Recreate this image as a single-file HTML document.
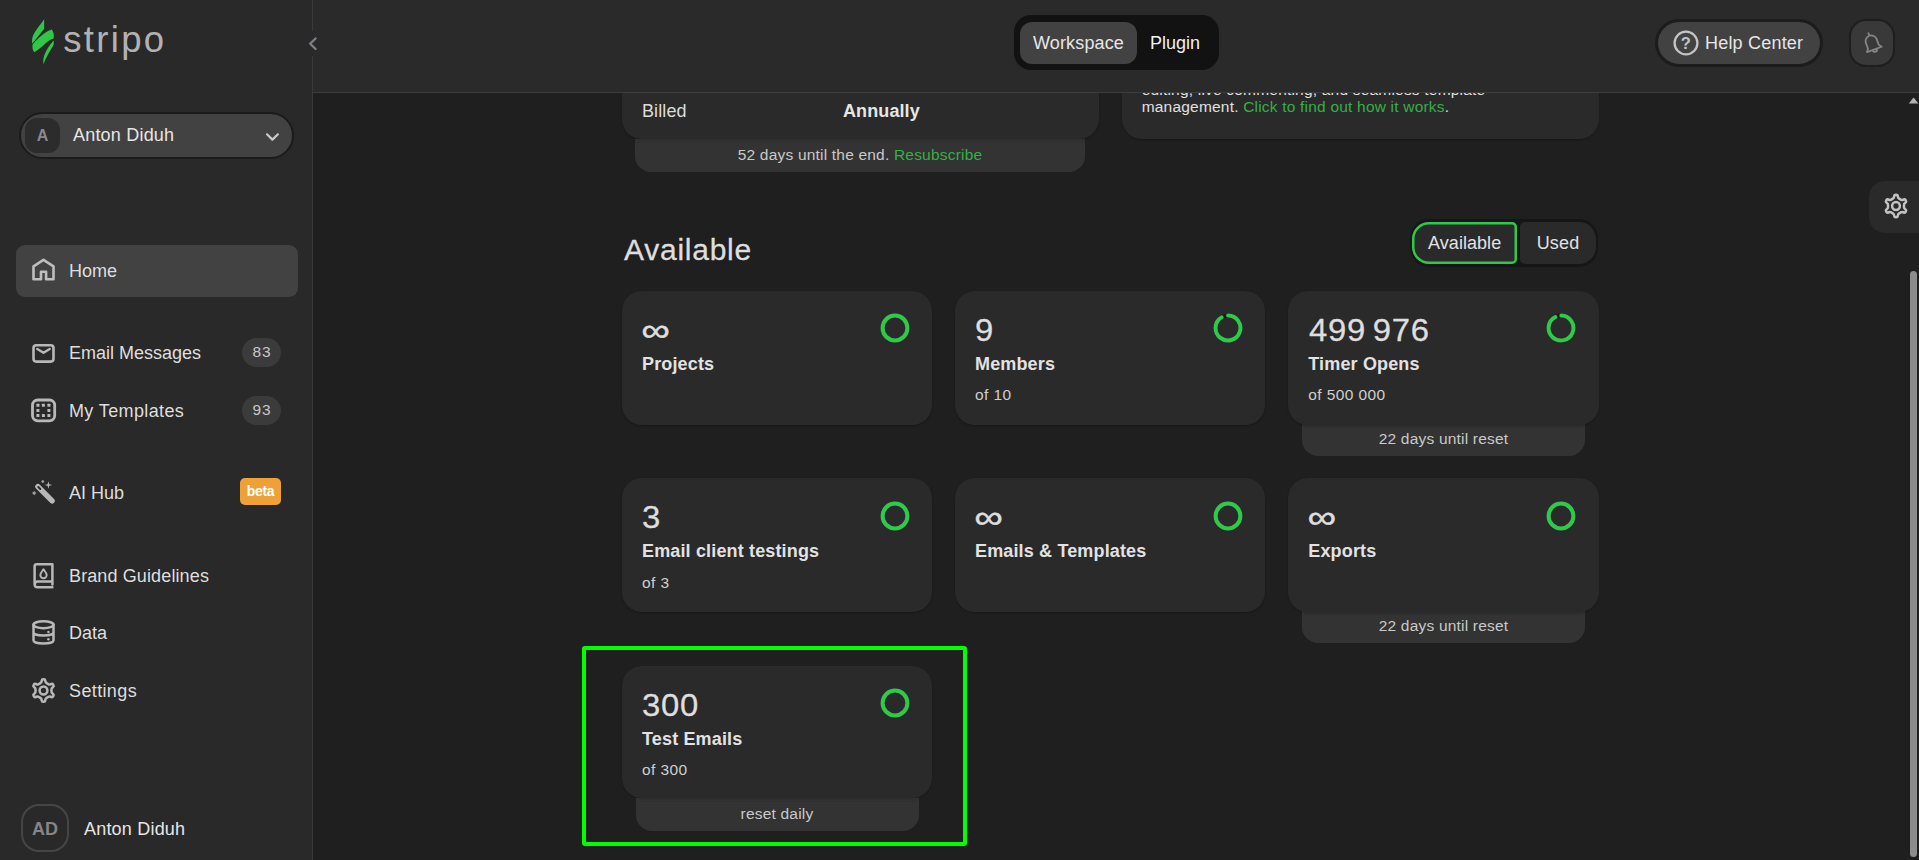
<!DOCTYPE html>
<html lang="en">
<head>
<meta charset="utf-8">
<title>Stripo</title>
<style>
*{box-sizing:border-box;margin:0;padding:0}
html,body{width:1919px;height:860px;overflow:hidden;background:#1f1f1f}
body{font-family:"Liberation Sans",Arial,sans-serif;color:#e4e4e4;position:relative}
.abs{position:absolute}
/* ---------- sidebar ---------- */
#side{position:absolute;left:0;top:0;width:313px;height:860px;background:#292929;border-right:1px solid #3a3a3a}
#logo-txt{position:absolute;left:63.3px;top:17.5px;font-size:36.5px;line-height:44px;color:#b2b2b2;letter-spacing:2.3px}
#ws{position:absolute;left:19px;top:112px;width:275px;height:47px;border-radius:24px;background:#424242;border:2px solid #1b1b1b}
#ws .av{position:absolute;left:4px;top:4px;width:35px;height:35px;border-radius:12px;background:#2c2c2c;color:#8a8a8a;font-weight:bold;font-size:16px;line-height:35px;text-align:center}
#ws .nm{position:absolute;left:52px;top:0;line-height:43px;font-size:18px;color:#e6e6e6;letter-spacing:0.2px}
.nav{position:absolute;left:16px;width:281px;height:51px;border-radius:8px}
.nav.on{background:#424242}
.nav svg{position:absolute;left:15px;top:13px;width:25px;height:25px}
.nav .t{position:absolute;left:53px;top:1px;line-height:51px;font-size:18px;color:#dedede;white-space:nowrap}
.badge{position:absolute;left:226px;top:11px;width:39px;height:29px;border-radius:15px;background:#3b3b3b;color:#c8c8c8;font-size:15.5px;line-height:27px;text-align:center;letter-spacing:0.9px;padding-left:0.9px}
.beta{position:absolute;left:224px;top:11px;width:41px;height:27px;border-radius:5px;background:#eda136;color:#fff;font-size:14px;font-weight:bold;line-height:26px;text-align:center;letter-spacing:-0.3px}
#user .av{position:absolute;left:21px;top:804px;width:48px;height:48px;border-radius:18px;border:2px solid #464646;color:#858585;font-weight:bold;font-size:18px;line-height:47px;text-align:center}
#user .nm{position:absolute;left:84px;top:805px;line-height:48px;font-size:18px;color:#e6e6e6;letter-spacing:0.2px}
/* ---------- topbar ---------- */
#top{position:absolute;left:313px;top:0;width:1606px;height:93px;background:#2a2a2a;border-bottom:1px solid #3d3d3d;z-index:5}
#seg{position:absolute;left:701px;top:15px;width:205px;height:55px;border-radius:17px;background:#121212}
#seg .a{position:absolute;left:6px;top:7px;width:117px;height:42px;border-radius:12px;background:#424242;color:#e6e6e6;letter-spacing:0.15px;font-size:18px;line-height:42px;text-align:center}
#seg .b{position:absolute;left:123px;top:7px;width:76px;height:42px;color:#f0f0f0;font-size:18px;line-height:42px;text-align:center}
#help{position:absolute;left:1342px;top:19px;width:168px;height:48px;border-radius:24px;background:#424242;border:3px solid #1c1c1c}
#help .t{position:absolute;left:47px;top:0;line-height:43px;font-size:18px;letter-spacing:0.2px;color:#e6e6e6;white-space:nowrap}
#bell{position:absolute;left:1536px;top:19px;width:46px;height:48px;border-radius:17px;background:#393939;border:2px solid #1e1e1e}
/* ---------- main ---------- */
.card{position:absolute;z-index:1;background:#2a2a2a;border-radius:20px;box-shadow:0 1px 2px rgba(0,0,0,.25)}
.foot{position:absolute;background:#333333;box-shadow:inset 0 1px 0 #393939;border-radius:0 0 16px 16px;color:#c9c9c9;font-size:15.5px;letter-spacing:0.2px;text-align:center;white-space:nowrap}
.foot::before{content:"";position:absolute;left:2px;right:2px;top:3px;border-top:1px dotted #2c2c2c}
.g{color:#34b045}
.big{position:absolute;left:19.5px;top:22px;font-size:31px;line-height:36px;color:#dedede;-webkit-text-stroke:0.3px #dedede;white-space:nowrap;letter-spacing:0.7px;word-spacing:-3px;transform:scaleX(1.06);transform-origin:0 50%}
.inf{position:absolute;left:19.5px;top:19px;font-size:40px;line-height:40px;color:#dedede;-webkit-text-stroke:0.6px #dedede;transform:scale(1,0.8);transform-origin:0 50%}
.ttl{position:absolute;left:20px;top:61px;font-size:18px;line-height:24px;font-weight:bold;color:#e2e2e2;white-space:nowrap;letter-spacing:0.15px}
.sub{position:absolute;left:20px;top:94px;font-size:15.5px;letter-spacing:0.4px;line-height:20px;color:#cfcfcf;white-space:nowrap}
.ring{position:absolute;left:257px;top:21px;width:32px;height:32px}
</style>
</head>
<body>

<!-- ================= MAIN ================= -->
<div id="main">
  <div class="card" style="left:622px;top:40px;width:477.3px;height:99px">
    <div class="abs" style="left:20px;top:59px;font-size:18px;line-height:24px;color:#dcdcdc;letter-spacing:0.1px">Billed</div>
    <div class="abs" style="left:221px;top:59px;font-size:18px;line-height:24px;color:#e6e6e6;font-weight:bold;letter-spacing:0.1px">Annually</div>
  </div>
  <div class="foot" style="left:635px;top:138.5px;width:450px;height:33.5px;line-height:32px">52 days until the end. <span class="g">Resubscribe</span></div>

  <div class="card" style="left:1121.700px;top:40px;width:477.5px;height:98.500px">
    <div class="abs" style="left:20px;top:41px;font-size:15.5px;letter-spacing:0.2px;line-height:17px;color:#e0e0e0;white-space:nowrap">editing, live commenting, and seamless template<br>management. <span class="g">Click to find out how it works</span>.</div>
  </div>

  <div class="abs" style="left:624px;top:230px;font-size:30px;line-height:40px;color:#dedede;letter-spacing:0.75px;-webkit-text-stroke:0.3px #dedede">Available</div>

  <div class="abs" style="left:1409.800px;top:219.300px;width:188px;height:47.300px;border-radius:19.500px;background:#161616">
    <div class="abs" style="left:2.200px;top:2.700px;width:105.300px;height:41.900px;border-radius:17px 5px 5px 17px;background:#2a2a2a;box-shadow:inset 0 0 0 2.500px #2fc84a;font-size:18px;line-height:42.500px;text-align:center;color:#e2e2e2;letter-spacing:0.05px">Available</div>
    <div class="abs" style="left:110.600px;top:2.700px;width:75.300px;height:41.900px;border-radius:5px 17px 17px 5px;background:#2a2a2a;font-size:18px;line-height:42.500px;text-align:center;color:#e2e2e2;letter-spacing:0.15px">Used</div>
  </div>
  <div class="card" style="left:622px;top:291px;width:310px;height:133.5px"><div class="inf">∞</div><div class="ttl">Projects</div><svg class="ring" viewBox="0 0 32 32"><circle cx="16" cy="16" r="12.4" fill="none" stroke="#2fc94b" stroke-width="4"/></svg></div>
  <div class="card" style="left:955px;top:291px;width:310px;height:133.5px"><div class="big">9</div><div class="ttl">Members</div><div class="sub">of 10</div><svg class="ring" viewBox="0 0 32 32"><circle cx="16" cy="16" r="12.4" fill="none" stroke="#1c1c1c" stroke-width="4"/><path d="M16.11 3.60 A12.4 12.4 0 1 1 9.56 5.40" fill="none" stroke="#2fc94b" stroke-width="4" stroke-linecap="round"/></svg></div>
  <div class="card" style="left:1288.3px;top:291px;width:310.5px;height:133.5px"><div class="big" style="left:21px">499 976</div><div class="ttl">Timer Opens</div><div class="sub">of 500 000</div><svg class="ring" viewBox="0 0 32 32"><circle cx="16" cy="16" r="12.4" fill="none" stroke="#1c1c1c" stroke-width="4"/><path d="M16.35 3.60 A12.4 12.4 0 1 1 10.31 4.98" fill="none" stroke="#2fc94b" stroke-width="4" stroke-linecap="round"/></svg></div>
  <div class="foot" style="left:1302px;top:423.5px;width:283px;height:32.5px;line-height:29px">22 days until reset</div>
  <div class="card" style="left:622px;top:477.5px;width:310px;height:134.5px"><div class="big">3</div><div class="ttl">Email client testings</div><div class="sub" style="margin-top:1.5px">of 3</div><svg class="ring" style="margin-top:1px" viewBox="0 0 32 32"><circle cx="16" cy="16" r="12.4" fill="none" stroke="#2fc94b" stroke-width="4"/></svg></div>
  <div class="card" style="left:955px;top:477.5px;width:310px;height:134.5px"><div class="inf">∞</div><div class="ttl">Emails &amp; Templates</div><svg class="ring" style="margin-top:1px" viewBox="0 0 32 32"><circle cx="16" cy="16" r="12.4" fill="none" stroke="#2fc94b" stroke-width="4"/></svg></div>
  <div class="card" style="left:1288.3px;top:477.5px;width:310.5px;height:134.5px"><div class="inf">∞</div><div class="ttl">Exports</div><svg class="ring" style="margin-top:1px" viewBox="0 0 32 32"><circle cx="16" cy="16" r="12.4" fill="none" stroke="#2fc94b" stroke-width="4"/></svg></div>
  <div class="foot" style="left:1302px;top:611px;width:283px;height:32px;line-height:29.5px">22 days until reset</div>
  <div class="card" style="left:622px;top:666px;width:310px;height:132px"><div class="big">300</div><div class="ttl">Test Emails</div><div class="sub">of 300</div><svg class="ring" viewBox="0 0 32 32"><circle cx="16" cy="16" r="12.4" fill="none" stroke="#2fc94b" stroke-width="4"/></svg></div>
  <div class="foot" style="left:635.5px;top:798px;width:283px;height:33px;line-height:31px">reset daily</div>
  <div class="abs" style="left:582px;top:645.5px;width:384.5px;height:200px;border:4px solid #00ff00;border-radius:3px"></div>
  <div class="abs" id="gearbtn" style="left:1869px;top:181px;width:50px;height:52px;border-radius:16px 0 0 16px;background:#2a2a2a">
    <svg class="abs" style="left:6.600px;top:5.300px" width="40" height="40" viewBox="0 0 40 40" fill="none" stroke="#c2c2c2" stroke-width="2.500" stroke-linejoin="round"><path d="M23.13 12.60 Q22.01 11.95 21.84 10.66 L21.75 10.00 Q21.59 8.71 20.29 8.71 L19.71 8.71 Q18.41 8.71 18.25 10.00 L18.16 10.66 Q17.99 11.95 16.87 12.60 L15.16 13.58 Q14.03 14.23 12.83 13.74 L12.22 13.48 Q11.02 12.98 10.37 14.11 L10.08 14.60 Q9.43 15.73 10.46 16.52 L10.99 16.92 Q12.02 17.71 12.02 19.01 L12.02 20.99 Q12.02 22.29 10.99 23.08 L10.46 23.48 Q9.43 24.27 10.08 25.40 L10.37 25.89 Q11.02 27.02 12.22 26.52 L12.83 26.26 Q14.03 25.77 15.16 26.42 L16.87 27.40 Q17.99 28.05 18.16 29.34 L18.25 30.00 Q18.41 31.29 19.71 31.29 L20.29 31.29 Q21.59 31.29 21.75 30.00 L21.84 29.34 Q22.01 28.05 23.13 27.40 L24.84 26.42 Q25.97 25.77 27.17 26.26 L27.78 26.52 Q28.98 27.02 29.63 25.89 L29.92 25.40 Q30.57 24.27 29.54 23.48 L29.01 23.08 Q27.98 22.29 27.98 20.99 L27.98 19.01 Q27.98 17.71 29.01 16.92 L29.54 16.52 Q30.57 15.73 29.92 14.60 L29.63 14.11 Q28.98 12.98 27.78 13.48 L27.17 13.74 Q25.97 14.23 24.84 13.58 Z"/><circle cx="20" cy="20" r="3.900"/></svg>
  </div>
  <div class="abs" style="left:1910px;top:271px;width:7px;height:586px;border-radius:4px;background:#8c8c8c"></div>
  <svg class="abs" style="left:1907px;top:96px" width="12" height="8" viewBox="1907 96 12 8"><path d="M1908.8 103.4 L1913.6 97.600 L1918.400 103.400z" fill="#b4b4b4"/></svg>
</div>

<!-- ================= TOPBAR ================= -->
<div id="top">
  <div id="seg"><div class="a">Workspace</div><div class="b">Plugin</div></div>
  <div id="help"><svg class="abs" style="left:14px;top:6.600px" width="28" height="28" viewBox="0 0 28 28"><circle cx="14" cy="14" r="11.4" fill="none" stroke="#c4c4c4" stroke-width="2.3"/><text x="13.800" y="20.400" text-anchor="middle" font-family="Liberation Sans, sans-serif" font-weight="bold" font-size="16.5" fill="#c4c4c4">?</text></svg><div class="t">Help Center</div></div>
  <div id="bell"><svg class="abs" style="left:7px;top:8px" width="28" height="28" viewBox="0 0 28 28" fill="none" stroke="#858585" stroke-width="1.800" stroke-linecap="round" stroke-linejoin="round"><g transform="rotate(-20 14 14)"><path d="M14 3.500 V5.500 M8.300 18 V12 a5.700 5.700 0 0 1 11.400 0 V18 L21.800 20.800 H6.200 Z M12 21 a2.300 2.300 0 0 0 4.600 0"/></g></svg></div>
</div>

<!-- ================= SIDEBAR ================= -->
<div id="side">
  <div id="logo-txt">stripo</div>
  <div id="ws"><div class="av">A</div><div class="nm">Anton Diduh</div></div>

  <div class="abs" style="left:15.5px;top:244.5px;width:282px;height:52px;border-radius:9px;background:#424242"></div>
  <div class="nav" style="top:245px"><div class="t">Home</div></div>
  <div class="nav" style="top:327px"><div class="t">Email Messages</div><div class="badge">83</div></div>
  <div class="nav" style="top:385px"><div class="t" style="letter-spacing:0.37px">My Templates</div><div class="badge">93</div></div>
  <div class="nav" style="top:467px"><div class="t">AI Hub</div><div class="beta">beta</div></div>
  <div class="nav" style="top:550px"><div class="t" style="letter-spacing:0.12px">Brand Guidelines</div></div>
  <div class="nav" style="top:607px"><div class="t">Data</div></div>
  <div class="nav" style="top:665px"><div class="t" style="letter-spacing:0.37px">Settings</div></div>

  <div id="user"><div class="av">AD</div><div class="nm">Anton Diduh</div></div>
<svg class="abs" style="left:20px;top:10px" width="160" height="65" viewBox="0 0 1920 780">
  <path d="M290 112 C235 190 165 270 148 335 C142 365 143 385 147 404 C172 370 235 298 290 224 Z" fill="#2fc748"/>
  <path d="M150 416 C215 340 300 258 380 234 C405 262 413 305 402 346 C335 352 262 462 172 506 C152 485 147 450 150 416 Z" fill="#2fc748"/>
  <path d="M403 366 C408 385 406 405 400 425 C350 505 305 585 282 652 C276 610 280 580 290 548 C312 490 355 415 403 366 Z" fill="#2fc748"/>
</svg>
<div class="abs" style="left:300px;top:31px;width:13px;height:25px;background:#292929;z-index:9;overflow:visible"><svg class="abs" style="left:0;top:0;overflow:visible" width="26" height="25" viewBox="300 31 26 25"><path d="M315.6 38.5 L310.2 43.7 L315.6 49" fill="none" stroke="#7c8086" stroke-width="2.3" stroke-linecap="round" stroke-linejoin="round"/></svg></div>
<svg class="abs" style="left:24px;top:250px" width="40" height="40" viewBox="0 0 40 40" fill="none" stroke="#b8b8b8" stroke-width="2.6" stroke-linecap="round" stroke-linejoin="round"><path d="M9.5 29.3 V16.3 L19.5 9.9 L29.5 16.3 V29.3 H22.1 V21.8 H17 V29.3 Z" stroke="#bebebe" stroke-linejoin="round"/></svg>
<svg class="abs" style="left:24px;top:332px" width="40" height="40" viewBox="0 0 40 40" fill="none" stroke="#b8b8b8" stroke-width="2.6" stroke-linecap="round" stroke-linejoin="round"><rect x="9.5" y="13.2" width="20" height="16.4" rx="2.8"/><path d="M13.3 16.9 L19.5 20.7 L25.7 16.9" stroke-width="2.4"/></svg>
<svg class="abs" style="left:24px;top:390px" width="40" height="40" viewBox="0 0 40 40" fill="none" stroke="#b8b8b8" stroke-width="2.6" stroke-linecap="round" stroke-linejoin="round"><rect x="8.5" y="10" width="22.2" height="20.8" rx="5.2" stroke-width="2.8"/><rect x="12.4" y="13.8" width="3" height="3" rx="0.4" fill="#b8b8b8" stroke="none"/><rect x="17.9" y="13.8" width="3" height="3" rx="0.4" fill="#b8b8b8" stroke="none"/><rect x="23.4" y="13.8" width="3" height="3" rx="0.4" fill="#b8b8b8" stroke="none"/><rect x="12.4" y="19.0" width="3" height="3" rx="0.4" fill="#b8b8b8" stroke="none"/><rect x="23.4" y="19.0" width="3" height="3" rx="0.4" fill="#b8b8b8" stroke="none"/><rect x="12.4" y="24.1" width="3" height="3" rx="0.4" fill="#b8b8b8" stroke="none"/><rect x="17.9" y="24.1" width="3" height="3" rx="0.4" fill="#b8b8b8" stroke="none"/><rect x="23.4" y="24.1" width="3" height="3" rx="0.4" fill="#b8b8b8" stroke="none"/></svg>
<svg class="abs" style="left:24px;top:472px" width="40" height="40" viewBox="0 0 40 40" fill="none" stroke="#b8b8b8" stroke-width="2.6" stroke-linecap="round" stroke-linejoin="round"><path d="M13.9 14.6 L28.1 28.9" stroke-width="5.4"/><path d="M14.3 15 L16.3 17" stroke="#292929" stroke-width="1.9"/><path d="M24.4 9.2 L25.2 12.2 L28.2 13 L25.2 13.8 L24.4 16.8 L23.6 13.8 L20.6 13 L23.6 12.2Z" fill="#b8b8b8" stroke="none"/><path d="M18.8 7.7 L20.6 9.5 L18.8 11.3 L17 9.5Z" fill="#9a9a9a" stroke="none"/><path d="M10.2 19 L12.3 21.1 L10.2 23.2 L8.1 21.1Z" fill="#9a9a9a" stroke="none"/></svg>
<svg class="abs" style="left:24px;top:555px" width="40" height="40" viewBox="0 0 40 40" fill="none" stroke="#b8b8b8" stroke-width="2.6" stroke-linecap="round" stroke-linejoin="round"><path d="M10.6 29.6 V11.4 a2.2 2.2 0 0 1 2.200-2.200 H28.4 V26.600 H13.500 a2.800 2.800 0 0 0 0 5.600 H28.400 M28.4 26.6 V29.400" stroke-width="2.5"/><path d="M19.5 14.3 C20.6 16 22.7 18 22.7 20.000 a3.200 3.200 0 0 1 -6.400 0 C16.300 18 18.400 16 19.500 14.300Z" stroke-width="1.9"/></svg>
<svg class="abs" style="left:24px;top:612px" width="40" height="40" viewBox="0 0 40 40" fill="none" stroke="#b8b8b8" stroke-width="2.6" stroke-linecap="round" stroke-linejoin="round"><ellipse cx="19.5" cy="12.7" rx="10" ry="3.5" stroke-width="2.5"/><path d="M9.5 12.7 V28.2 C9.5 32.6 29.5 32.6 29.5 28.2 V12.7 M9.5 20.3 C9.5 24.700 29.500 24.700 29.500 20.300" stroke-width="2.5"/><circle cx="24.4" cy="19.9" r="1.2" fill="#b8b8b8" stroke="none"/><circle cx="24.400" cy="27.300" r="1.200" fill="#b8b8b8" stroke="none"/></svg>
<svg class="abs" style="left:24px;top:670px" width="40" height="40" viewBox="0 0 40 40" fill="none" stroke="#b8b8b8" stroke-width="2.6" stroke-linecap="round" stroke-linejoin="round"><path d="M22.63 13.10 Q21.51 12.45 21.34 11.16 L21.25 10.50 Q21.09 9.21 19.79 9.21 L19.21 9.21 Q17.91 9.21 17.75 10.50 L17.66 11.16 Q17.49 12.45 16.37 13.10 L14.66 14.08 Q13.53 14.73 12.33 14.24 L11.72 13.98 Q10.52 13.48 9.87 14.61 L9.58 15.10 Q8.93 16.23 9.96 17.02 L10.49 17.42 Q11.52 18.21 11.52 19.51 L11.52 21.49 Q11.52 22.79 10.49 23.58 L9.96 23.98 Q8.93 24.77 9.58 25.90 L9.87 26.39 Q10.52 27.52 11.72 27.02 L12.33 26.76 Q13.53 26.27 14.66 26.92 L16.37 27.90 Q17.49 28.55 17.66 29.84 L17.75 30.50 Q17.91 31.79 19.21 31.79 L19.79 31.79 Q21.09 31.79 21.25 30.50 L21.34 29.84 Q21.51 28.55 22.63 27.90 L24.34 26.92 Q25.47 26.27 26.67 26.76 L27.28 27.02 Q28.48 27.52 29.13 26.39 L29.42 25.90 Q30.07 24.77 29.04 23.98 L28.51 23.58 Q27.48 22.79 27.48 21.49 L27.48 19.51 Q27.48 18.21 28.51 17.42 L29.04 17.02 Q30.07 16.23 29.42 15.10 L29.13 14.61 Q28.48 13.48 27.28 13.98 L26.67 14.24 Q25.47 14.73 24.34 14.08 Z" stroke-width="2.5"/><circle cx="19.5" cy="20.5" r="3.9" stroke-width="2.5"/></svg>
<svg class="abs" style="left:262px;top:128px" width="20" height="18" viewBox="262 128 20 18"><path d="M267 134.3 L272.4 139.6 L277.9 134.3" fill="none" stroke="#cacaca" stroke-width="2.2" stroke-linecap="round" stroke-linejoin="round"/></svg>
</div>

</body>
</html>
